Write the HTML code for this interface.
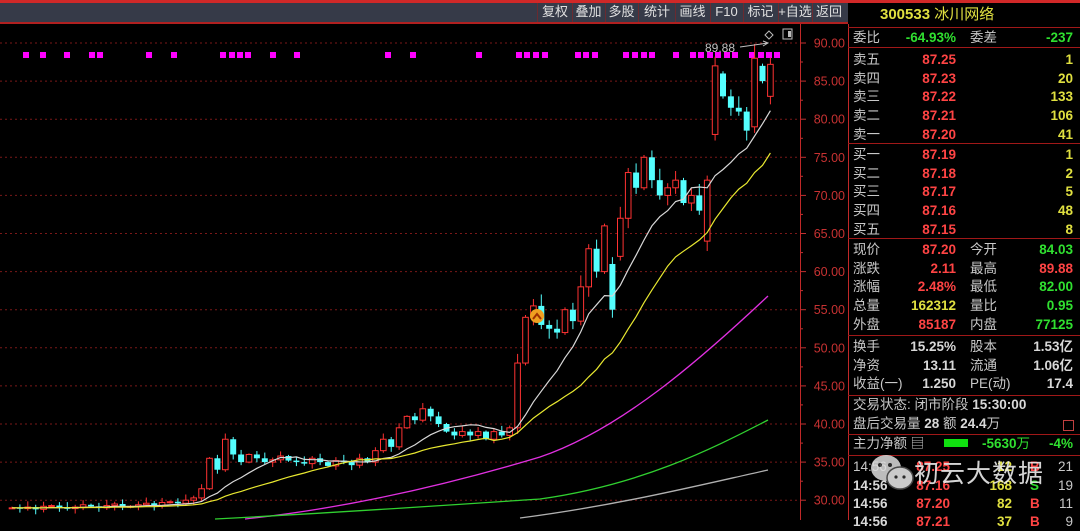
<!DOCTYPE html>
<html><head><meta charset="utf-8"><style>
*{margin:0;padding:0;box-sizing:border-box}
body{width:1080px;height:520px;background:#000;overflow:hidden;position:relative;font-family:"Liberation Sans","Noto Sans CJK SC",sans-serif;}
#redtop{position:absolute;left:0;top:0;width:1080px;height:3px;background:#d02828}
#top{position:absolute;left:0;top:3px;width:848px;height:21px;background:#363a48;border-bottom:2px solid #b02020}
#top span{position:absolute;top:1px;font-size:13px;line-height:16px;color:#e0e0e0;text-align:center;white-space:nowrap}
#top i{position:absolute;top:0;width:1px;height:19px;background:#6a2a30}
.r{position:absolute;font-size:13.5px;line-height:18px;white-space:nowrap;font-weight:bold}
.l{color:#c8c8c8;font-weight:normal}
.red{color:#ff4444}.yel{color:#e0e040}.grn{color:#30e030}.wh{color:#d8d8d8}
.sep{position:absolute;left:848px;width:232px;height:1px;background:#a01818}
</style></head><body>
<svg id="ch" width="1080" height="520" style="position:absolute;left:0;top:0"></svg>
<div id="redtop"></div>
<div id="top">
<i style="left:537px"></i><span style="left:538px;width:34px">复权</span>
<i style="left:572px"></i><span style="left:572px;width:33px">叠加</span>
<i style="left:605px"></i><span style="left:605px;width:33px">多股</span>
<i style="left:638px"></i><span style="left:639px;width:36px">统计</span>
<i style="left:675px"></i><span style="left:675px;width:35px">画线</span>
<i style="left:710px"></i><span style="left:710px;width:33px">F10</span>
<i style="left:743px"></i><span style="left:743px;width:35px">标记</span>
<i style="left:778px"></i><span style="left:776px;width:38px">+自选</span>
<i style="left:812px"></i><span style="left:812px;width:34px">返回</span>
</div>
<div class="r yel" style="left:880px;top:6px;font-size:15px">300533 <span style="font-weight:normal">冰川网络</span></div>
<div id="panel"></div>
<div style="position:absolute;left:866px;top:448px;width:60px;height:50px;opacity:.85">
<svg width="60" height="50"><ellipse cx="20" cy="20" rx="15" ry="13" fill="#ddd"/><ellipse cx="34" cy="30" rx="13" ry="11" fill="#eee" stroke="#555" stroke-width="1.5"/><circle cx="14" cy="17" r="2" fill="#333"/><circle cx="24" cy="17" r="2" fill="#333"/><circle cx="30" cy="29" r="1.6" fill="#333"/><circle cx="38" cy="29" r="1.6" fill="#333"/></svg></div>
<div style="position:absolute;left:914px;top:454px;font-size:25px;color:rgba(235,235,235,.9);font-family:'Noto Sans CJK SC',sans-serif;letter-spacing:1px">初云大数据</div>
<script>
var S='';
function y(p){return 43+(90-p)*7.62}
for(var p=90;p>=30;p-=5){var yy=y(p).toFixed(1);S+='<line x1="0" x2="800" y1="'+yy+'" y2="'+yy+'" stroke="#7a1818" stroke-dasharray="2,3"/>';S+='<line x1="800" x2="806" y1="'+yy+'" y2="'+yy+'" stroke="#c03030"/>';S+='<text x="845" y="'+(+yy+4.5)+'" fill="#c83232" font-size="12.5" text-anchor="end" font-family="Liberation Sans">'+p.toFixed(2)+'</text>';}
for(var p=87.5;p>=30;p-=2.5){if(p%5==0)continue;var yy=y(p).toFixed(1);S+='<line x1="800" x2="803" y1="'+yy+'" y2="'+yy+'" stroke="#c03030"/>';}
S+='<line x1="800.5" x2="800.5" y1="24" y2="520" stroke="#c02828"/>';
S+='<line x1="848.5" x2="848.5" y1="24" y2="520" stroke="#c02828"/>';
[26,43,67,92,100,149,174,223,232,240,248,273,297,388,413,479,519,527,536,545,578,586,595,626,635,644,652,676,693,701,710,718,727,735,752,761,769,777].forEach(function(x){S+='<rect x="'+(x-3)+'" y="52" width="6" height="6" fill="#ff00ff"/>'});
var C=[29.0,28.9,29.1,28.8,29.2,29.3,29.0,28.9,29.1,29.4,29.2,29.0,29.3,29.5,29.1,29.2,29.4,29.6,29.3,29.7,29.8,29.6,30.0,30.3,
31.5,35.5,34.0,38.0,36.0,35.0,36.0,35.5,35.0,35.3,35.8,35.2,35.0,34.8,35.5,35.0,34.5,35.2,35.0,34.6,35.5,35.0,
36.5,38.0,37.0,39.5,41.0,40.5,42.0,41.0,40.0,39.0,38.5,39.0,38.5,39.0,38.0,39.0,38.5,39.5,
48,54,55.5,53,52.5,52,55,53.5,58,63,60,66,55,67,73,71,75,72,70,71,72,69,70,68,72,87,83,81.5,81,78.5,88,85,87.2];
var O={76:61,88:64,89:78,90:86,94:79,95:87,96:83,65:48,73:58,75:60,77:62};
var ma=function(n,i){var s=0;for(var k=i-n+1;k<=i;k++)s+=(k<0?29:C[k]);return s/n};
var w='',yl='';
for(var i=0;i<C.length;i++){var x=12+i*7.9;var c=C[i];var o=O[i]!=null?O[i]:(i?C[i-1]:29);var up=c>=o;
var sc=c>45?1:0.5;
var hi=Math.max(o,c)+(0.3+((i*7)%5)*0.3)*sc,lo=Math.min(o,c)-(0.3+((i*3)%5)*0.25)*sc;if(i==94)hi=89.88;
var col=up?'#ff3232':'#54ffff';var t=y(Math.max(o,c)),b=y(Math.min(o,c));if(b-t<1)b=t+1;
S+='<line x1="'+x+'" x2="'+x+'" y1="'+y(hi)+'" y2="'+y(lo)+'" stroke="'+col+'"/>';
S+=up?'<rect x="'+(x-2.8)+'" y="'+t+'" width="5.6" height="'+(b-t)+'" fill="#000" stroke="'+col+'"/>':'<rect x="'+(x-3)+'" y="'+t+'" width="6" height="'+(b-t)+'" fill="'+col+'"/>';
w+=(i?'L':'M')+x+','+y(ma(10,i)).toFixed(1);yl+=(i?'L':'M')+x+','+y(ma(20,i)+(i>60?-0.5:0)).toFixed(1);}
S+='<path d="'+w+'" fill="none" stroke="#d8d8d8" stroke-width="1.2"/>';
S+='<path d="'+yl+'" fill="none" stroke="#e8e830" stroke-width="1.2"/>';
S+='<path d="M245,519 C330,510 430,490 540,457 C620,430 700,360 768,296" fill="none" stroke="#e030e0" stroke-width="1.3"/>';
S+='<path d="M215,519 C350,512 450,505 540,499 C640,485 710,450 768,420" fill="none" stroke="#30d030" stroke-width="1.3"/>';
S+='<path d="M520,518 C620,505 700,485 768,470" fill="none" stroke="#b0b0b0" stroke-width="1.3"/>';
S+='<circle cx="537" cy="316" r="7" fill="#f0a020"/><path d="M533,319 L537,314 L541,319" stroke="#a03000" stroke-width="2" fill="none"/>';
S+='<text x="705" y="52" fill="#c0c0c0" font-size="12" font-family="Liberation Sans">89.88</text><path d="M740,47 L768,43 M763,41 L768,43 L763,46" stroke="#c0c0c0" fill="none"/>';
S+='<path d="M769,31 L773,35 L769,39 L765,35Z" stroke="#bbb" fill="none"/><rect x="783" y="29" width="9" height="10" stroke="#bbb" fill="none"/><rect x="788" y="31" width="3" height="6" fill="#bbb"/>';
document.getElementById('ch').innerHTML=S;
var P='';
function row(t,a){P+='<div class="r" style="left:0;top:'+t+'px;width:1080px">';a.forEach(function(e){P+='<span class="'+e[0]+'" style="position:absolute;'+e[1]+'">'+e[2]+'</span>'});P+='</div>'}
function L(x,t){return['l','left:'+x+'px',t]}
function R(r,c,t){return[c,'right:'+(1080-r)+'px',t]}
row(29,[L(853,'委比'),R(956,'grn','-64.93%'),L(970,'委差'),R(1073,'grn','-237')]);
var sl=['卖五','卖四','卖三','卖二','卖一'],sp=['87.25','87.23','87.22','87.21','87.20'],sv=['1','20','133','106','41'];
for(var k=0;k<5;k++)row(51+k*18.7,[L(853,sl[k]),R(956,'red',sp[k]),R(1073,'yel',sv[k])]);
var bl=['买一','买二','买三','买四','买五'],bp=['87.19','87.18','87.17','87.16','87.15'],bv=['1','2','5','48','8'];
for(var k=0;k<5;k++)row(146+k*18.7,[L(853,bl[k]),R(956,'red',bp[k]),R(1073,'yel',bv[k])]);
var q=[['现价','red','87.20','今开','grn','84.03'],['涨跌','red','2.11','最高','red','89.88'],['涨幅','red','2.48%','最低','grn','82.00'],['总量','yel','162312','量比','grn','0.95'],['外盘','red','85187','内盘','grn','77125']];
for(var k=0;k<5;k++)row(241+k*18.7,[L(853,q[k][0]),R(956,q[k][1],q[k][2]),L(970,q[k][3]),R(1073,q[k][4],q[k][5])]);
var z=[['换手','15.25%','股本','1.53亿'],['净资','13.11','流通','1.06亿'],['收益(一)','1.250','PE(动)','17.4']];
for(var k=0;k<3;k++)row(338+k*18.7,[L(853,z[k][0]),R(956,'wh',z[k][1]),L(970,z[k][2]),R(1073,'wh',z[k][3])]);
row(396,[['wh','left:853px','<span class="l">交易状态:</span> <span class="l">闭市阶段</span> 15:30:00']]);
row(415,[['wh','left:853px','<span class="l">盘后交易量</span> 28 <span class="l">额</span> 24.4<span class="l">万</span>']]);
P+='<div style="position:absolute;left:1063px;top:420px;width:11px;height:11px;border:1px solid #c04040"></div>';
row(435,[L(853,'主力净额 ▤'),['grn','left:944px','<span style="display:inline-block;width:24px;height:8px;background:#10e010;vertical-align:1px"></span>'],R(1030,'grn','-5630<span style="font-weight:normal">万</span>'),R(1073,'grn','-4%')]);
row(458,[L(853,'14:56'),R(950,'red','87.25'),R(1012,'yel','12'),['red','left:1030px','B'],R(1073,'l','21')]);
row(477,[['wh','left:853px','14:56'],R(950,'red','87.16'),R(1012,'yel','168'),['grn','left:1030px','S'],R(1073,'l','19')]);
row(495,[['wh','left:853px','14:56'],R(950,'red','87.20'),R(1012,'yel','82'),['red','left:1030px','B'],R(1073,'l','11')]);
row(513,[['wh','left:853px','14:56'],R(950,'red','87.21'),R(1012,'yel','37'),['red','left:1030px','B'],R(1073,'l','9')]);
[27,47,143,238,335,395,434,455].forEach(function(t){P+='<div class="sep" style="top:'+t+'px"></div>'});
document.getElementById('panel').innerHTML=P;
</script>
</body></html>
